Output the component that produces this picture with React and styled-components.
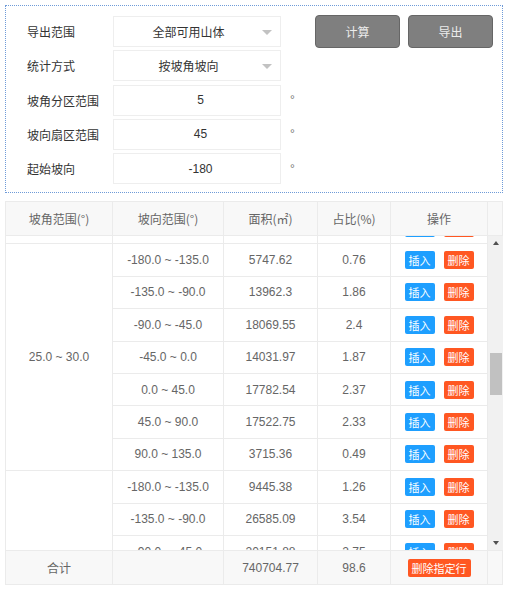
import React, { useLayoutEffect, useRef } from 'react';
import styled, { createGlobalStyle } from 'styled-components';

const GlobalStyle = createGlobalStyle`
  html, body { margin: 0; padding: 0; background: #fff; }
  body {
    font-family: "Liberation Sans", "Noto Sans CJK SC", sans-serif;
    font-size: 12px;
    color: #333;
  }
  * { box-sizing: border-box; }
`;

const ROW_H = 32.4;
const VIEW_H = 314;
const ARROW_H = 14;
const COLS = '107px 111px 94px 73px 97px';
const BORDER = '#ebebeb';

const Page = styled.div`
  width: 508px;
  padding: 5px;
`;

const FormBox = styled.div`
  width: 498px;
  border: 1px dotted #6f9bd8;
  padding: 10px 9px 8px 21px;
  display: flex;
  justify-content: space-between;
  align-items: flex-start;
`;

const Fields = styled.div`
  display: flex;
  flex-direction: column;
  gap: 3.25px;
`;

const FieldRow = styled.div`
  display: flex;
  align-items: center;
  height: 31px;
`;

const Label = styled.div`
  width: 86px;
  color: #333;
  font-family: "Noto Sans CJK SC", sans-serif;
  font-size: 12px;
`;

const SelectBox = styled.div`
  position: relative;
  width: 168px;
  height: 31px;
  border: 1px solid #eeeeee;
  background: #fff;
  display: flex;
  align-items: center;
  justify-content: center;
  padding-right: 17px;
  color: #333;
  font-family: "Noto Sans CJK SC", sans-serif;
`;

const Caret = styled.span`
  position: absolute;
  right: 8px;
  top: 13px;
  width: 0;
  height: 0;
  border-left: 5px solid transparent;
  border-right: 5px solid transparent;
  border-top: 5px solid #c2c2c2;
`;

const NumInput = styled.input`
  width: 168px;
  height: 31px;
  border: 1px solid #eeeeee;
  background: #fff;
  text-align: center;
  padding: 0 0 0 7px;
  font-family: "Liberation Sans", sans-serif;
  font-size: 12px;
  color: #333;
  outline: none;
`;

const Unit = styled.span`
  margin-left: 9px;
  color: #777;
  font-size: 12px;
`;

const Actions = styled.div`
  display: flex;
  gap: 8px;
  margin-top: -1px;
`;

const GrayButton = styled.button`
  width: 85px;
  height: 33px;
  background: #7f7f7f;
  border: 1px solid #666;
  border-radius: 4px;
  color: #ececec;
  font-family: "Noto Sans CJK SC", sans-serif;
  font-size: 12px;
  padding: 0;
  cursor: pointer;
`;

const Table = styled.div`
  width: 498px;
  margin-top: 8px;
  border-left: 1px solid ${BORDER};
`;

const HeaderRow = styled.div`
  display: grid;
  grid-template-columns: ${COLS} 15px;
  height: 35px;
  background: #f8f8f8;
  border-top: 1px solid ${BORDER};
`;

const HeadCell = styled.div`
  display: flex;
  align-items: center;
  justify-content: center;
  border-right: 1px solid ${BORDER};
  border-bottom: 1px solid ${BORDER};
  color: #666;
  font-family: "Noto Sans CJK SC", sans-serif;
  font-size: 12px;
`;

const BodyWrap = styled.div`
  display: flex;
  height: ${VIEW_H}px;
`;

const BodyScroll = styled.div`
  width: 482px;
  height: ${VIEW_H}px;
  overflow: hidden;
`;

const BodyGrid = styled.div`
  display: grid;
  grid-template-columns: ${COLS};
  grid-auto-rows: ${ROW_H}px;
`;

const Cell = styled.div`
  display: flex;
  align-items: center;
  justify-content: center;
  gap: 9px;
  border-right: 1px solid ${BORDER};
  border-bottom: 1px solid ${BORDER};
  color: #666;
  font-size: 12px;
  white-space: nowrap;
  grid-row: ${(p) => (p.$span ? `span ${p.$span}` : 'auto')};
`;

const SmallButton = styled.button`
  height: 18px;
  padding: 0 4px;
  border: none;
  border-radius: 2px;
  background: ${(p) => (p.$danger ? '#ff5722' : '#1e9fff')};
  color: #fff;
  font-family: "Noto Sans CJK SC", sans-serif;
  font-size: 11px;
  line-height: 18px;
  white-space: nowrap;
  cursor: pointer;
`;

const ScrollBar = styled.div`
  width: 15px;
  height: ${VIEW_H}px;
  background: #f1f1f1;
  display: flex;
  flex-direction: column;
`;

const ArrowBox = styled.div`
  height: ${ARROW_H}px;
  display: flex;
  align-items: center;
  justify-content: center;
  &::after {
    content: '';
    width: 0;
    height: 0;
    border-left: 3.5px solid transparent;
    border-right: 3.5px solid transparent;
    ${(p) =>
      p.$down
        ? 'border-top: 4px solid #505050;'
        : 'border-bottom: 4px solid #505050;'}
  }
`;

const Track = styled.div`
  flex: 1;
  display: flex;
  flex-direction: column;
`;

const Thumb = styled.div`
  margin: 0 1px 0 2px;
  background: #c1c1c1;
`;

const FooterRow = styled.div`
  display: grid;
  grid-template-columns: ${COLS} 15px;
  height: 35px;
  background: #f8f8f8;
  border-top: 1px solid ${BORDER};
  border-bottom: 1px solid ${BORDER};
`;

const FootCell = styled.div`
  display: flex;
  align-items: center;
  justify-content: center;
  border-right: 1px solid ${BORDER};
  color: #666;
  font-family: "Liberation Sans", "Noto Sans CJK SC", sans-serif;
  font-size: 12px;
`;

/* ---------- data ---------- */

const sector = (i) => {
  const a = -180 + i * 45;
  return `${a.toFixed(1)} ~ ${(a + 45).toFixed(1)}`;
};

const fakeRows = (count, seed) =>
  Array.from({ length: count }, (_, i) => {
    const v = ((seed * 7919 + i * 104729) % 25000) + 1200 + ((i * 37 + seed) % 100) / 100;
    return { aspect: sector(i), area: v.toFixed(2), pct: (v / 7510).toFixed(2) };
  });

const groups = [
  { slope: '0.0 ~ 5.0', rows: fakeRows(3, 1) },
  { slope: '5.0 ~ 10.0', rows: fakeRows(4, 2) },
  { slope: '10.0 ~ 15.0', rows: fakeRows(5, 3) },
  { slope: '15.0 ~ 20.0', rows: fakeRows(5, 4) },
  { slope: '20.0 ~ 25.0', rows: fakeRows(7, 5) },
  {
    slope: '25.0 ~ 30.0',
    rows: [
      { aspect: '-180.0 ~ -135.0', area: '5747.62', pct: '0.76' },
      { aspect: '-135.0 ~ -90.0', area: '13962.3', pct: '1.86' },
      { aspect: '-90.0 ~ -45.0', area: '18069.55', pct: '2.4' },
      { aspect: '-45.0 ~ 0.0', area: '14031.97', pct: '1.87' },
      { aspect: '0.0 ~ 45.0', area: '17782.54', pct: '2.37' },
      { aspect: '45.0 ~ 90.0', area: '17522.75', pct: '2.33' },
      { aspect: '90.0 ~ 135.0', area: '3715.36', pct: '0.49' },
    ],
  },
  {
    slope: '30.0 ~ 35.0',
    rows: [
      { aspect: '-180.0 ~ -135.0', area: '9445.38', pct: '1.26' },
      { aspect: '-135.0 ~ -90.0', area: '26585.09', pct: '3.54' },
      { aspect: '-90.0 ~ -45.0', area: '20151.88', pct: '2.75' },
      ...fakeRows(8, 6).slice(3),
    ],
  },
  { slope: '35.0 ~ 40.0', rows: fakeRows(8, 7) },
  { slope: '40.0 ~ 45.0', rows: fakeRows(8, 8) },
  { slope: '45.0 ~ 50.0', rows: fakeRows(6, 9) },
  { slope: '50.0 ~ 55.0', rows: fakeRows(5, 10) },
];

const rowsBefore = groups.slice(0, 5).reduce((s, g) => s + g.rows.length, 0);
const totalRows = groups.reduce((s, g) => s + g.rows.length, 0);
const SCROLL_TOP = rowsBefore * ROW_H - 9;
const contentH = totalRows * ROW_H;
const trackH = VIEW_H - 2 * ARROW_H;
const thumbH = (trackH * VIEW_H) / contentH;
const thumbTop = ((trackH - thumbH) * SCROLL_TOP) / (contentH - VIEW_H);

const fields = [
  { label: '导出范围', type: 'select', value: '全部可用山体' },
  { label: '统计方式', type: 'select', value: '按坡角坡向' },
  { label: '坡角分区范围', type: 'num', value: '5' },
  { label: '坡向扇区范围', type: 'num', value: '45' },
  { label: '起始坡向', type: 'num', value: '-180' },
];

const headers = ['坡角范围(°)', '坡向范围(°)', '面积(㎡)', '占比(%)', '操作', ''];

export default function App() {
  const scrollRef = useRef(null);

  useLayoutEffect(() => {
    if (scrollRef.current) scrollRef.current.scrollTop = SCROLL_TOP;
  }, []);

  return (
    <Page>
      <GlobalStyle />
      <FormBox>
        <Fields>
          {fields.map((f) => (
            <FieldRow key={f.label}>
              <Label>{f.label}</Label>
              {f.type === 'select' ? (
                <SelectBox>
                  {f.value}
                  <Caret />
                </SelectBox>
              ) : (
                <>
                  <NumInput readOnly value={f.value} />
                  <Unit>°</Unit>
                </>
              )}
            </FieldRow>
          ))}
        </Fields>
        <Actions>
          <GrayButton>计算</GrayButton>
          <GrayButton>导出</GrayButton>
        </Actions>
      </FormBox>

      <Table>
        <HeaderRow>
          {headers.map((h, i) => (
            <HeadCell key={i}>{h}</HeadCell>
          ))}
        </HeaderRow>

        <BodyWrap>
          <BodyScroll ref={scrollRef}>
            <BodyGrid>
              {groups.map((g) =>
                g.rows.map((r, i) => (
                  <React.Fragment key={g.slope + i}>
                    {i === 0 && <Cell $span={g.rows.length}>{g.slope}</Cell>}
                    <Cell>{r.aspect}</Cell>
                    <Cell>{r.area}</Cell>
                    <Cell>{r.pct}</Cell>
                    <Cell>
                      <SmallButton>插入</SmallButton>
                      <SmallButton $danger>删除</SmallButton>
                    </Cell>
                  </React.Fragment>
                ))
              )}
            </BodyGrid>
          </BodyScroll>
          <ScrollBar>
            <ArrowBox />
            <Track>
              <Thumb style={{ marginTop: thumbTop, height: thumbH }} />
            </Track>
            <ArrowBox $down />
          </ScrollBar>
        </BodyWrap>

        <FooterRow>
          <FootCell>合计</FootCell>
          <FootCell />
          <FootCell>740704.77</FootCell>
          <FootCell>98.6</FootCell>
          <FootCell>
            <SmallButton $danger>删除指定行</SmallButton>
          </FootCell>
          <FootCell />
        </FooterRow>
      </Table>
    </Page>
  );
}
